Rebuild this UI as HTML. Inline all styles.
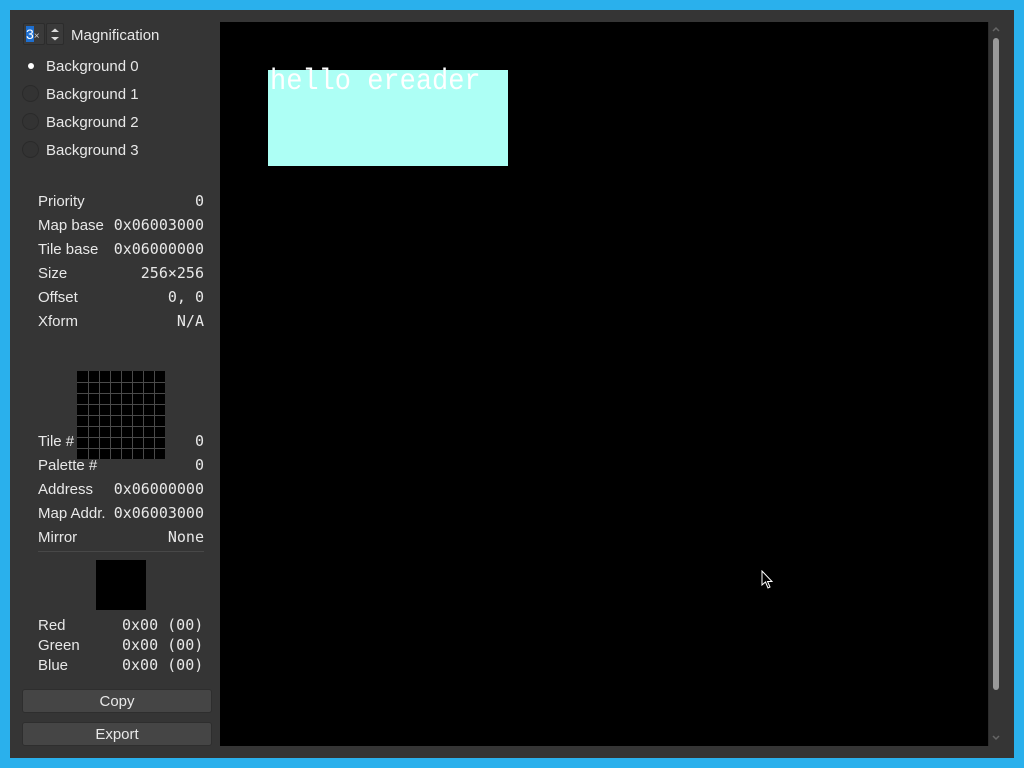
<!DOCTYPE html>
<html><head><style>
*{margin:0;padding:0;box-sizing:border-box}
body{width:1024px;height:768px;background:#2ab0ec;position:relative;overflow:hidden;font-family:"Liberation Sans",sans-serif;font-size:15px;color:#e8e8e8}
#win{position:absolute;left:10px;top:10px;width:1004px;height:748px;background:#353535}
.a{position:absolute;white-space:nowrap}
.l{margin-top:1px}
.m{font-family:"DejaVu Sans Mono","Liberation Mono",monospace;font-size:15px}
.r{text-align:right}
.radio{position:absolute;left:22px;width:17px;height:17px;border-radius:50%;border:1px solid #2a2a2a;background:#333}
.btn{position:absolute;left:22px;width:190px;height:24px;background:#454545;border:1px solid #2e2e2e;border-radius:3px;text-align:center;line-height:23px}
</style></head><body>
<div id="win"></div>
<div class="a" style="left:23px;top:23px;width:22px;height:22px;background:#3a3a3a;border:1px solid #2c2c2c;border-radius:2px"></div>
<div class="a" style="left:26px;top:26px;width:8px;height:16px;background:#1e6fd0"></div>
<div class="a" style="left:26px;top:26px;font-size:14px;color:#fff">3<span style="font-size:10px;color:#ccc">×</span></div>
<div class="a" style="left:46px;top:23px;width:18px;height:22px;background:#3a3a3a;border:1px solid #2c2c2c;border-radius:2px"></div>
<svg class="a" style="left:46px;top:23px" width="18" height="22"><path d="M5 9 L9 5.5 L13 9 Z" fill="#ddd"/><path d="M5 14 L9 17.5 L13 14 Z" fill="#ddd"/></svg>
<div class="a l" style="left:71px;top:26px">Magnification</div>
<div class="a" style="left:28px;top:63px;width:6px;height:6px;border-radius:50%;background:#fff"></div>
<div class="a l" style="left:46px;top:57px">Background 0</div>
<div class="radio" style="top:85px"></div><div class="a l" style="left:46px;top:85px">Background 1</div>
<div class="radio" style="top:113px"></div><div class="a l" style="left:46px;top:113px">Background 2</div>
<div class="radio" style="top:141px"></div><div class="a l" style="left:46px;top:141px">Background 3</div>

<div class="a l" style="left:38px;top:192px">Priority</div><div class="a m r" style="right:820px;top:192px">0</div>
<div class="a l" style="left:38px;top:216px">Map base</div><div class="a m r" style="right:820px;top:216px">0x06003000</div>
<div class="a l" style="left:38px;top:240px">Tile base</div><div class="a m r" style="right:820px;top:240px">0x06000000</div>
<div class="a l" style="left:38px;top:264px">Size</div><div class="a m r" style="right:820px;top:264px">256×256</div>
<div class="a l" style="left:38px;top:288px">Offset</div><div class="a m r" style="right:820px;top:288px">0, 0</div>
<div class="a l" style="left:38px;top:312px">Xform</div><div class="a m r" style="right:820px;top:312px">N/A</div>

<div class="a l" style="left:38px;top:432px">Tile #</div><div class="a m r" style="right:820px;top:432px">0</div>
<div class="a l" style="left:38px;top:456px">Palette #</div><div class="a m r" style="right:820px;top:456px">0</div>
<svg class="a" style="left:77px;top:371px" width="88" height="88">
<rect width="88" height="88" fill="#000"/>
<g stroke="#4a4a4a" stroke-width="1">
<path d="M11.5 0V88M22.5 0V88M33.5 0V88M44.5 0V88M55.5 0V88M66.5 0V88M77.5 0V88M0 11.5H88M0 22.5H88M0 33.5H88M0 44.5H88M0 55.5H88M0 66.5H88M0 77.5H88"/>
</g></svg>
<div class="a l" style="left:38px;top:480px">Address</div><div class="a m r" style="right:820px;top:480px">0x06000000</div>
<div class="a l" style="left:38px;top:504px">Map Addr.</div><div class="a m r" style="right:820px;top:504px">0x06003000</div>
<div class="a l" style="left:38px;top:528px">Mirror</div><div class="a m r" style="right:820px;top:528px">None</div>
<div class="a" style="left:38px;top:551px;width:166px;height:1px;background:#484848"></div>
<div class="a" style="left:96px;top:560px;width:50px;height:50px;background:#000"></div>
<div class="a l" style="left:38px;top:616px">Red</div><div class="a m" style="left:122px;top:616px">0x00 (00)</div>
<div class="a l" style="left:38px;top:636px">Green</div><div class="a m" style="left:122px;top:636px">0x00 (00)</div>
<div class="a l" style="left:38px;top:656px">Blue</div><div class="a m" style="left:122px;top:656px">0x00 (00)</div>
<div class="btn" style="top:689px">Copy</div>
<div class="btn" style="top:722px">Export</div>

<div class="a" style="left:220px;top:22px;width:768px;height:724px;background:#000"></div>
<div class="a" style="left:268px;top:70px;width:240px;height:96px;background:#adfff5"></div>
<div class="a" style="left:270px;top:69px;font-family:'Liberation Mono',monospace;font-size:27px;color:#fff;transform:scaleY(1.1);transform-origin:0 100%">hello ereader</div>
<svg class="a" style="left:760px;top:570px" width="16" height="20"><path d="M2 1 L2 15 L5.5 12 L8 18 L10 17 L7.5 11.5 L12 11.5 Z" fill="#000" stroke="#fff" stroke-width="1"/></svg>
<div class="a" style="left:988px;top:22px;width:14px;height:724px;background:#353535;border-left:1px solid #2c2c2c"></div>
<svg class="a" style="left:990px;top:24px" width="12" height="10"><path d="M3 7 L6 4 L9 7" fill="none" stroke="#666" stroke-width="1.5"/></svg>
<svg class="a" style="left:990px;top:733px" width="12" height="10"><path d="M3 3 L6 6 L9 3" fill="none" stroke="#666" stroke-width="1.5"/></svg>
<div class="a" style="left:993px;top:38px;width:6px;height:652px;background:#9a9a9a;border-radius:3px"></div>
</body></html>
